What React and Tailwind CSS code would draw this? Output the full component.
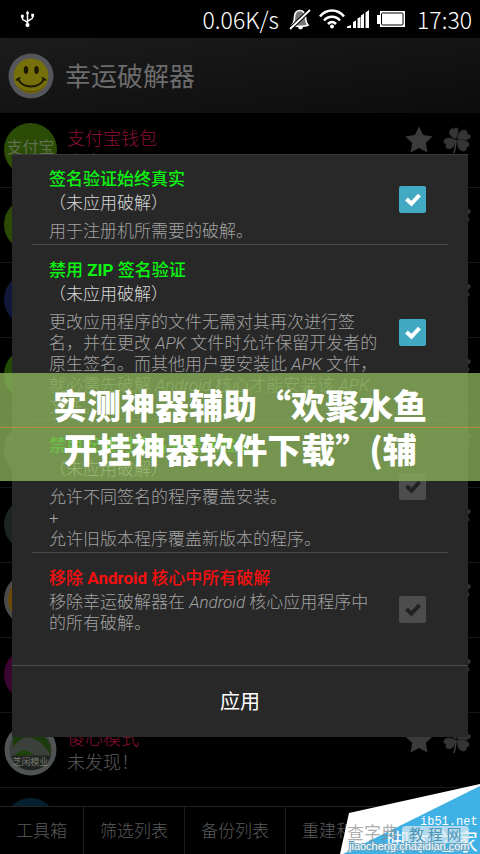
const SANS = "font-['Roboto','Noto_Sans_CJK_SC',sans-serif]";

const apps = [
  { name: '支付宝钱包', note: '未发现！', icon: 'alipay' },
  { icon: 'bg-[#2b4a05]' },
  { icon: 'bg-[#11173a]' },
  { icon: 'bg-[#234a05]' },
  { icon: 'bg-[#2c3030]' },
  { icon: 'bg-[#1b241e]' },
  { icon: 'bg-[#6b4a08] border-4 border-[#4a4a4a]' },
  { icon: 'bg-[#3a0530]' },
  { name: '傻心模式', note: '未发现！', icon: 'forest' },
  { icon: 'bg-[#04202e]' },
];

const patches = [
  {
    id: 'always-true',
    title: '签名验证始终真实',
    status: '（未应用破解）',
    lines: ['用于注册机所需要的破解。'],
    checked: true,
  },
  {
    id: 'zip',
    title: '禁用 ZIP 签名验证',
    status: '（未应用破解）',
    lines: [
      '更改应用程序的文件无需对其再次进行签',
      '名，并在更改 APK 文件时允许保留开发者的',
      '原生签名。而其他用户要安装此 APK 文件，',
      '就必需先破解 Android 核心才能安装该 APK',
      '文件。',
    ],
    checked: true,
  },
  {
    id: 'integrity',
    title: '禁用安装时签名完整性验证',
    status: '（未应用破解）',
    lines: ['允许不同签名的程序覆盖安装。', '+', '允许旧版本程序覆盖新版本的程序。'],
    checked: false,
  },
  {
    id: 'remove',
    title: '移除 Android 核心中所有破解',
    lines: ['移除幸运破解器在 Android 核心应用程序中', '的所有破解。'],
    checked: false,
    danger: true,
  },
];

function StatusBar() {
  return (
    <div className="flex h-[38px] shrink-0 items-center bg-black pl-5 pr-2 text-white">
      <svg viewBox="0 0 16 18" className="h-[18px] w-[15px]" fill="none" stroke="white" strokeWidth="1.6">
        <path d="M8 2v14M2.500 6v2.500c0 2.500 5.500 2 5.500 5M13.500 5v2.500c0 2.500-5.500 2-5.500 4.500" />
        <path d="M8 0l2 3.500H6zM1 4.500h3v3H1zM12 3.500h3v3h-3z" fill="white" stroke="none" />
        <circle cx="8" cy="15.500" r="2.200" fill="white" stroke="none" />
      </svg>
      <span className="ml-auto font-['Noto_Sans_CJK_SC',sans-serif] text-[23px] font-light leading-[38px]">0.06K/s</span>
      <svg viewBox="0 0 22 24" className="ml-2.5 h-6 w-[22px]">
        <path d="M3 18c2-2 2.500-4 2.500-8 0-4 2-6.500 5.500-6.500S16 6 16.500 10c.3 4 .5 6 2.500 8-3 1.800-13 1.800-16 0z" fill="#777" stroke="white" strokeWidth="1.600" />
        <path d="M9 20a2.500 2.500 0 0 0 5 0z" fill="white" />
        <path d="M1 22L21 3" stroke="black" strokeWidth="4" />
        <path d="M1 22L21 3" stroke="white" strokeWidth="1.800" />
      </svg>
      <svg viewBox="0 0 26 20" className="ml-2 h-5 w-[26px]" fill="none" stroke="white" strokeWidth="2.600">
        <path d="M1 7.500C7.500-.5 18.500-.5 25 7.500M5 11.500c4.500-5 11.500-5 16 0M9 15c2.500-2.600 5.500-2.600 8 0" />
        <circle cx="13" cy="17.500" r="2" fill="white" stroke="none" />
      </svg>
      <svg viewBox="0 0 22 18" className="ml-0.5 h-[18px] w-[22px]" fill="white">
        <path d="M0 16.500L4 15v3H0zM6 12l3-1.500V18H6zM10.500 8.500l3-1.800V18h-3zM14 5.500l3-2V18h-3zM18.500 2.500L22 0v18h-3.500z" />
      </svg>
      <svg viewBox="0 0 28 16" className="ml-2 h-4 w-7">
        <path d="M3 0h25v16H3v-3H0V4h3z" fill="white" />
        <rect x="4.500" y="2" width="21.500" height="12" rx="1" fill="white" stroke="black" strokeWidth="1" />
      </svg>
      <span className="ml-3 font-['Noto_Sans_CJK_SC',sans-serif] text-[23px] font-light leading-[38px]">17:30</span>
    </div>
  );
}

function Smiley() {
  return (
    <svg viewBox="0 0 46 46" className="h-[46px] w-[46px]">
      <circle cx="23" cy="23" r="22.500" fill="#54565c" />
      <circle cx="23" cy="23" r="17.500" fill="#76700a" />
      <path d="M8 31a17.500 17.500 0 0 0 30 0 19 19 0 0 1-30 0z" fill="#5d4c04" />
      <ellipse cx="18" cy="17" rx="2.200" ry="4" fill="#1c1800" />
      <ellipse cx="28.500" cy="17" rx="2.200" ry="4" fill="#1c1800" />
      <path d="M10 26c5 10 21 10 26 0M8.500 27l3-2M34.500 25l3 2" fill="none" stroke="#1c1800" strokeWidth="1.800" strokeLinecap="round" />
    </svg>
  );
}

function AppIcon({ icon }) {
  if (icon === 'alipay') {
    return (
      <div className="flex h-[53px] w-[53px] items-center justify-center overflow-hidden rounded-full bg-[#2b4c05] pb-1 text-base leading-none text-[#5f7050]">
        <span className="whitespace-nowrap">支付宝</span>
      </div>
    );
  }
  if (icon === 'forest') {
    return (
      <svg viewBox="0 0 54 54" className="h-[53px] w-[53px]">
        <circle cx="27" cy="27" r="26.500" fill="#4f5353" />
        <circle cx="27" cy="27" r="21.500" fill="#3c403c" />
        <path d="M9 14C20 4 38 4 47 22l1 11c-6-9-12-16-22-18-6-1-11 2-17 10z" fill="#1c3a0c" />
        <path d="M10 34c6-7 12-8 20-2l-6 1 5 4H9z" fill="#1c4408" />
        <path d="M7 33h41c-3 10-11 15-20 15S10 43 7 33z" fill="#222421" />
        <text x="27" y="43" textAnchor="middle" fontSize="9" fill="#777b74">芝闲模业</text>
      </svg>
    );
  }
  return <div className={`h-[53px] w-[53px] rounded-full ${icon}`} />;
}

function RowMarks() {
  return (
    <div className="ml-auto flex items-start gap-2 pt-3">
      <svg viewBox="0 0 30 30" className="h-[30px] w-[30px]">
        <path d="M15 1.500l4.200 8.600 9.400 1.300-6.800 6.600 1.700 9.500L15 23l-8.500 4.500 1.700-9.500-6.800-6.600 9.400-1.300z" fill="#3b3b3b" />
      </svg>
      <svg viewBox="0 0 30 30" className="h-[30px] w-[30px]" fill="#353535" stroke="#1a1a1a" strokeWidth=".6">
        <path d="M14 14C8 12 6 8 8 5c1-2 3-2 4-1 1-2 3-2 4 0 1 3 0 6-2 10z" />
        <path d="M15 14c1-6 4-10 8-9 2 0 3 2 2 4 3 0 5 2 3 4-2 3-8 3-13 1z" />
        <path d="M14 15c-5-3-10-3-12 0-1 2 0 4 2 4-1 3 0 5 3 5 4 0 6-4 7-9z" />
        <path d="M15 15c5-1 10 0 12 3 1 2 0 4-2 4 0 3-2 5-5 4-4-1-5-6-5-11z" />
        <path d="M14 15c0 5-1 9-2 13" fill="none" stroke="#3d3d3d" strokeWidth="1.500" />
      </svg>
    </div>
  );
}

function PatchItem({ patch }) {
  const { id, title, status, lines, checked, danger } = patch;
  return (
    <li className={`mx-5 flex items-center pl-[17px] pr-[22px] ${danger ? 'min-h-[112px]' : 'border-b border-[#4a4a4a]'}`}>
      <label htmlFor={id} className={`block flex-1 whitespace-nowrap pb-0.5 pt-[13px] text-[17px] ${danger ? 'self-start' : ''}`}>
        <span className={`block font-medium leading-6 ${danger ? 'text-[#f41010]' : 'text-[#0cf410]'}`}>
          {title.split(/(ZIP|Android)/).map((part, i) => (i % 2 ? <b key={i}>{part}</b> : part))}
        </span>
        {status && <span className="block font-light leading-6 text-[#d8d8d8]">{status}</span>}
        <span className={`block font-light leading-[21px] text-[#a3a3a3] ${status ? 'pt-1.5' : 'pt-0.5'}`}>
          {lines.map((line) => (
            <span key={line} className="block">
              {line.split(/(APK|Android)/).map((part, i) => (i % 2 ? <i key={i}>{part}</i> : part))}
            </span>
          ))}
        </span>
      </label>
      <span className="relative h-[27px] w-[27px] shrink-0">
        <input
          id={id}
          type="checkbox"
          defaultChecked={checked}
          className={`block h-[27px] w-[27px] appearance-none rounded-xs ${checked ? 'bg-[#41a9c1]' : 'bg-[#4d4d4d]'}`}
        />
        <svg viewBox="0 0 27 27" className="pointer-events-none absolute inset-0" fill="none" stroke={checked ? 'white' : '#222'} strokeWidth="4">
          <path d="M7.500 13l5 4.700L20.500 9" />
        </svg>
      </span>
    </li>
  );
}

function PatchDialog() {
  return (
    <div className="absolute inset-x-0 bottom-0 top-[37px] flex items-center px-3">
      <div role="dialog" className="w-full bg-[#282828] shadow-[inset_0_1px_#3c3c3c]">
        <ul>
          {patches.map((p) => <PatchItem key={p.id} patch={p} />)}
        </ul>
        <button className="block h-[72px] w-full border-t border-[#4a4a4a] text-xl text-white">应用</button>
      </div>
    </div>
  );
}

function Banner() {
  return (
    <div className="absolute inset-x-0 top-1/2 -translate-y-1/2 bg-[#88af59]/80 py-2.5 text-center font-['Noto_Sans_CJK_SC',sans-serif] text-[34px] font-black leading-[44px] text-white">
      <div className="absolute inset-x-0 top-1/2 h-px bg-[#bb8c38]" />
      <p className="relative whitespace-nowrap">实测神器辅助“欢聚水鱼<br />开挂神器软件下载”(辅</p>
    </div>
  );
}

function Watermark() {
  return (
    <svg viewBox="0 0 140 70" className="absolute bottom-0 right-0 h-[70px] w-[140px]">
      <path d="M0 70L9 29 140 0v70z" fill="#fff" />
      <path d="M3 70L140 2v68z" fill="#40b1e5" />
      <text x="80" y="41" fontSize="12" fontFamily="Liberation Mono" fill="#fff">ib51.net</text>
      <text x="46" y="66" fontSize="23" fill="#fff">脚本之家</text>
      <text x="7" y="55" fontSize="17" fill="#888" fillOpacity=".7">查字典</text>
      <rect x="62" y="42" width="67" height="17" rx="4" fill="#d8e8f0" fillOpacity=".75" />
      <text x="69" y="56" fontSize="15" fill="#4a94b5">教 程 网</text>
      <text x="9" y="66" fontSize="11" fontFamily="Liberation Sans" fill="#fff" stroke="#6ba6c2" strokeWidth="2" paintOrder="stroke">jiaocheng.chazidian.com</text>
    </svg>
  );
}

export default function App() {
  return (
    <div className={`relative flex h-screen flex-col overflow-hidden bg-black ${SANS}`}>
      <StatusBar />
      <header className="flex h-[75px] shrink-0 items-center gap-[11px] bg-linear-to-br from-[#1c1c1c] to-[#0c0c0c] pl-2">
        <Smiley />
        <h1 className="pt-1 text-[26px] text-[#6c6c6c]">幸运破解器</h1>
      </header>
      <ul className="min-h-0 flex-1 overflow-hidden">
        {apps.map((app, i) => (
          <li key={i} className="flex h-[75px] items-start border-b border-[#171717] pl-1 pr-2">
            <div className="flex h-[73px] items-center"><AppIcon icon={app.icon} /></div>
            {app.name && (
              <div className="ml-2.5 pt-3.5 text-lg font-light leading-6">
                <p className="text-[#8c0f33]">{app.name}</p>
                <p className="text-[#5a5a5a]">{app.note}</p>
              </div>
            )}
            <RowMarks />
          </li>
        ))}
      </ul>
      <nav className="flex h-12 shrink-0 overflow-hidden border-t border-[#222] bg-black text-[17px] font-light text-[#5a5a5a]">
        {['工具箱', '筛选列表', '备份列表', '重建和安装'].map((tab) => (
          <button key={tab} className="shrink-0 border-r border-[#1c1c1c] px-4 pt-0.5">{tab}</button>
        ))}
      </nav>
      <PatchDialog />
      <Banner />
      <Watermark />
    </div>
  );
}
